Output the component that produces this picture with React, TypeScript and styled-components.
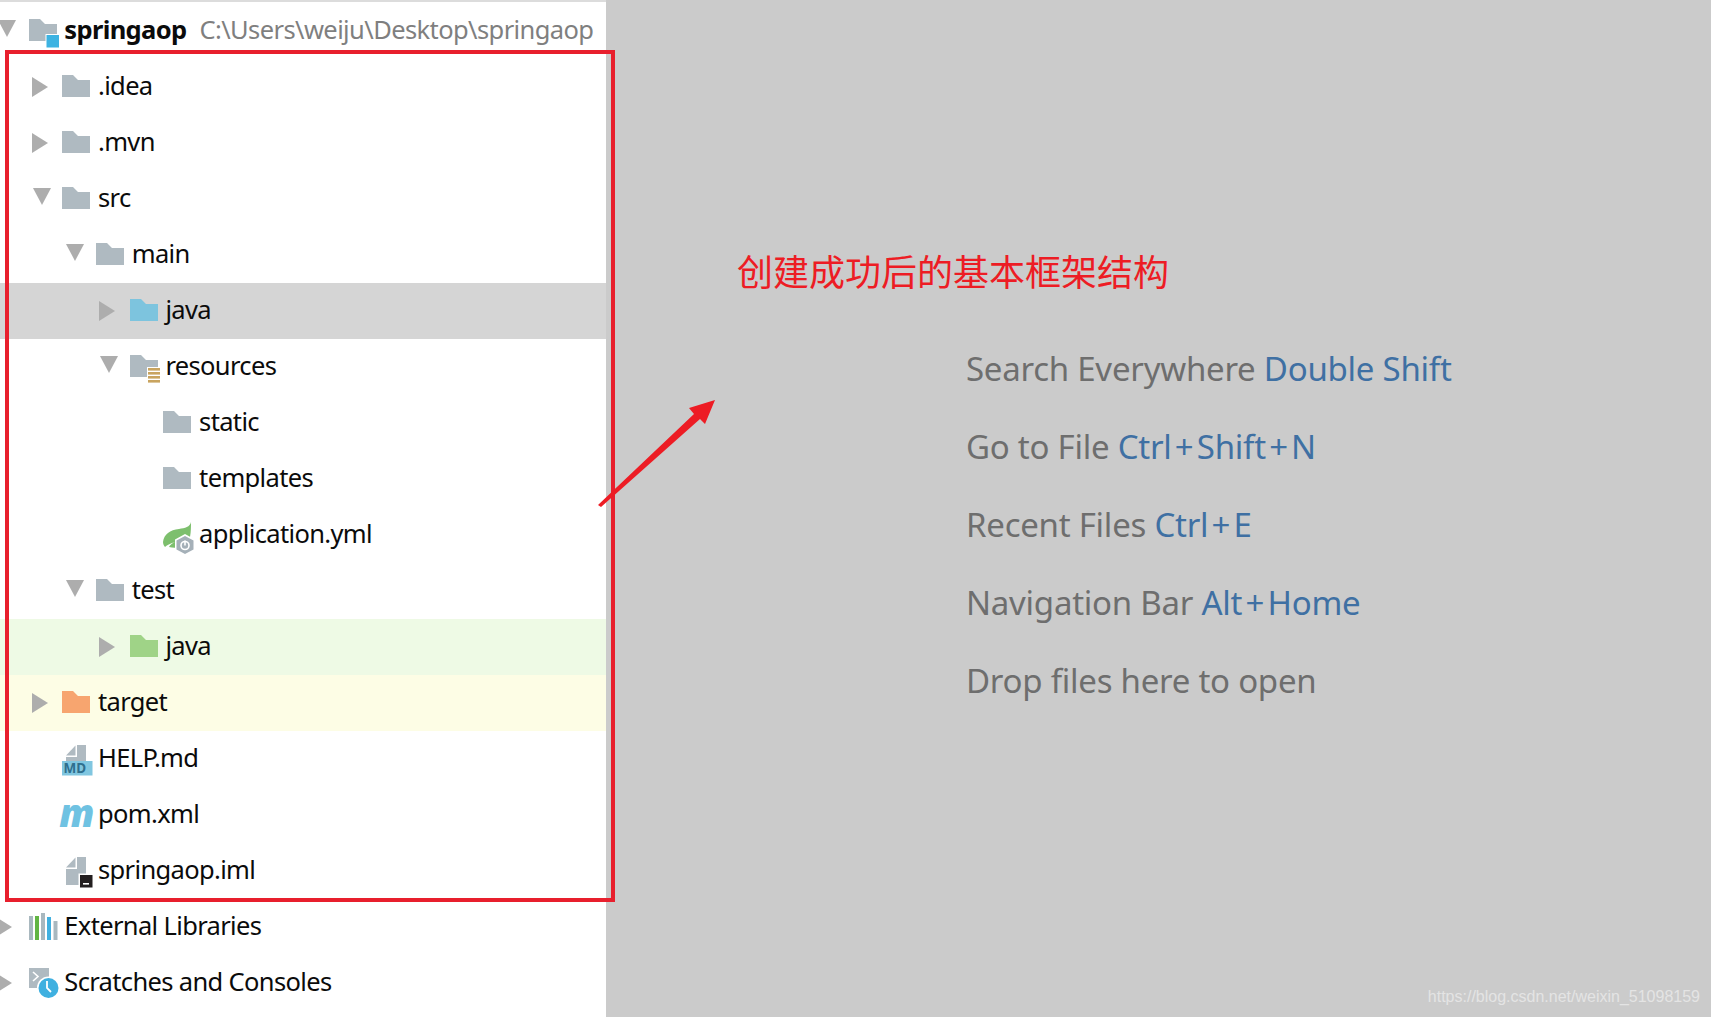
import React from 'react';
import styled, { createGlobalStyle } from 'styled-components';

const Global = createGlobalStyle`
  html, body { margin: 0; padding: 0; width: 100%; height: 100%; overflow: hidden; background: #cbcbcb; }
  #root { width: 100%; height: 100%; }
`;

const Page = styled.div`
  position: relative;
  display: flex;
  width: 1711px;
  height: 1017px;
  overflow: hidden;
  background: #cbcbcb;
  font-family: "Noto Sans", "Open Sans", sans-serif;
`;

const Sidebar = styled.aside`
  width: 606px;
  flex: none;
  box-sizing: border-box;
  padding-top: 1px;
  border-top: 2px solid #dcdcdc;
  background: #fff;
  overflow: hidden;
`;

const Row = styled.div<{ $depth: number; $bg?: string }>`
  display: flex;
  align-items: center;
  height: 56px;
  padding-left: ${p => p.$depth * 33.7}px;
  background: ${p => p.$bg ?? 'transparent'};
  white-space: nowrap;
`;

const ArrowSlot = styled.span`
  width: 27px;
  flex: none;
  display: flex;
  align-items: center;
`;

const IconSlot = styled.span`
  width: 35.8px;
  height: 32px;
  margin-left: 1.5px;
  margin-top: -2px;
  flex: none;
  display: block;
  svg { display: block; overflow: visible; }
`;

const Label = styled.span<{ $bold?: boolean }>`
  font-size: 25.5px;
  line-height: 32px;
  padding-bottom: 4px;
  color: #0b0b0b;
  letter-spacing: -0.65px;
  font-weight: ${p => (p.$bold ? 700 : 400)};
`;

const PathText = styled.span`
  margin-left: 13px;
  padding-bottom: 4px;
  font-size: 25.5px;
  line-height: 32px;
  color: #7f7f7f;
  letter-spacing: -0.6px;
`;

const Main = styled.main`
  flex: 1;
  display: flex;
  flex-direction: column;
  padding-top: 247px;
`;

const Note = styled.div`
  margin-left: 131px;
  font-family: "Noto Sans CJK SC", sans-serif;
  font-size: 36px;
  line-height: 46px;
  color: #ed1c24;
`;

const Hints = styled.div`
  margin-top: 54px;
  margin-left: 360px;
  display: flex;
  flex-direction: column;
  gap: 34px;
`;

const Hint = styled.div`
  font-size: 33px;
  line-height: 44px;
  letter-spacing: -0.25px;
  color: #6e6e6e;
  white-space: nowrap;
`;

const Key = styled.span`
  color: #3f70a3;
`;

const Plus = styled.span`
  margin: 0 3.3px;
`;

const RedBox = styled.div`
  position: absolute;
  left: 5px;
  top: 50px;
  width: 610px;
  height: 852px;
  box-sizing: border-box;
  border: 4px solid #e81f2d;
  pointer-events: none;
`;

const ArrowOverlay = styled.svg`
  position: absolute;
  left: 590px;
  top: 390px;
`;

const Watermark = styled.div`
  position: absolute;
  right: 11px;
  bottom: 10px;
  font-family: "Liberation Sans", sans-serif;
  font-size: 16px;
  line-height: 20px;
  color: #e4e4e4;
`;

const Right = ({ d }: { d: number }) => (
  <svg width="17" height="20" viewBox="0 0 17 20" style={{ marginLeft: d === 0 ? -4 : -2 }}>
    <path d="M0 0 L16 10 L0 20 Z" fill="#adadad" />
  </svg>
);

const Down = ({ d }: { d: number }) => (
  <svg width="19" height="17" viewBox="0 0 19 17" style={{ marginLeft: d === 0 ? -2 : -1, marginTop: -6 }}>
    <path d="M0 0 H18 L9 17 Z" fill="#adadad" />
  </svg>
);

const Folder = ({ color = '#afbac1' }: { color?: string }) => (
  <svg width="28" height="32" viewBox="0 0 28 32">
    <path d="M0 5 H11 L16 10 H28 V27 H0 Z" fill={color} />
  </svg>
);

const ProjectIcon = () => (
  <svg width="32" height="32" viewBox="0 0 32 32">
    <path d="M0 5 H11 L16 10 H28 V27 H0 Z" fill="#afbac1" />
    <rect x="16.5" y="20" width="15" height="15" fill="#fff" />
    <rect x="17.5" y="21" width="12.5" height="12.5" fill="#3db3e2" />
  </svg>
);

const ResourcesIcon = () => (
  <svg width="32" height="32" viewBox="0 0 32 32">
    <path d="M0 5 H11 L16 10 H28 V27 H0 Z" fill="#afbac1" />
    <rect x="17" y="17" width="15" height="17" fill="#fff" />
    <g fill="#c9a45f">
      <rect x="18" y="18" width="12" height="2.6" />
      <rect x="18" y="22" width="12" height="2.6" />
      <rect x="18" y="26" width="12" height="2.6" />
      <rect x="18" y="30" width="12" height="2.6" />
    </g>
  </svg>
);

const SpringIcon = () => (
  <svg width="32" height="32" viewBox="0 0 32 32">
    <path d="M28 4 C27 9 22 10 16 11 C7 12 1 16 0 24 C0 26 1 28 2 29 C4 27 8 25 12 24 C9 25 7 27 6 29 C14 31 24 29 27 19 C28 14 28 8 28 4 Z" fill="#7dbf6d" />
    <path d="M22 16 L32 21.5 V32.5 L22 38 L12 32.5 V21.5 Z" fill="#fff" />
    <path d="M22 18 L30.5 22.5 V31.5 L22 36 L13.5 31.5 V22.5 Z" fill="#a5b0b8" />
    <circle cx="22" cy="27.5" r="4" fill="none" stroke="#fff" strokeWidth="1.6" />
    <rect x="21.2" y="22.5" width="1.6" height="5" fill="#fff" />
  </svg>
);

const PageFold = () => (
  <>
    <path d="M15 3 H24 V19 H4 V15 H15 Z" fill="#afbac1" />
    <path d="M4 13.5 L13.5 3.5 V13.5 Z" fill="#afbac1" />
  </>
);

const MdIcon = () => (
  <svg width="31" height="34" viewBox="0 0 31 34">
    <PageFold />
    <rect x="0" y="19" width="30.5" height="14.5" fill="#80c6e0" />
    <text x="1.5" y="31" fontFamily="Noto Sans, sans-serif" fontWeight="700" fontSize="13.5" fill="#2f6f8e">MD</text>
  </svg>
);

const MavenLetter = styled.span`
  display: block;
  font-family: "Open Sans", sans-serif;
  font-style: italic;
  font-weight: 800;
  font-size: 38px;
  line-height: 32px;
  margin-top: -2px;
  margin-left: -3px;
  color: #6fc2e2;
`;

const ImlIcon = () => (
  <svg width="32" height="34" viewBox="0 0 32 34">
    <path d="M15 3 H24 V31 H4 V15 H15 Z" fill="#afbac1" />
    <path d="M4 13.5 L13.5 3.5 V13.5 Z" fill="#afbac1" />
    <rect x="16.5" y="19.5" width="15" height="15" fill="#fff" />
    <rect x="18" y="21" width="12.5" height="12.5" fill="#231f20" />
    <rect x="21" y="29" width="6" height="1.6" fill="#fff" />
  </svg>
);

const LibIcon = () => (
  <svg width="29" height="32" viewBox="0 0 29 32">
    <rect x="0" y="6" width="4" height="24" fill="#a9b8bf" />
    <rect x="6" y="6" width="4" height="24" fill="#62b543" />
    <rect x="12" y="3" width="4" height="27" fill="#a9b8bf" />
    <rect x="18" y="7" width="4" height="23" fill="#40b0e0" />
    <rect x="24.5" y="11" width="4" height="19" fill="#a9b8bf" />
  </svg>
);

const ScratchIcon = () => (
  <svg width="32" height="34" viewBox="0 0 32 34">
    <rect x="0" y="2" width="20" height="20" fill="#afbac1" />
    <path d="M4 6 L9 10.5 L4 15" fill="none" stroke="#fff" strokeWidth="1.6" />
    <circle cx="19.5" cy="22" r="11.5" fill="#fff" />
    <circle cx="19.5" cy="22" r="10" fill="#3fb0e0" />
    <path d="M18 15 V22 L22 26" fill="none" stroke="#fff" strokeWidth="1.8" />
  </svg>
);

type Item = {
  d: number;
  a?: 'r' | 'd';
  icon: React.ReactNode;
  text: string;
  bg?: string;
};

const items: Item[] = [
  { d: 1, a: 'r', icon: <Folder />, text: '.idea' },
  { d: 1, a: 'r', icon: <Folder />, text: '.mvn' },
  { d: 1, a: 'd', icon: <Folder />, text: 'src' },
  { d: 2, a: 'd', icon: <Folder />, text: 'main' },
  { d: 3, a: 'r', icon: <Folder color="#7dc4de" />, text: 'java', bg: '#d5d5d5' },
  { d: 3, a: 'd', icon: <ResourcesIcon />, text: 'resources' },
  { d: 4, icon: <Folder />, text: 'static' },
  { d: 4, icon: <Folder />, text: 'templates' },
  { d: 4, icon: <SpringIcon />, text: 'application.yml' },
  { d: 2, a: 'd', icon: <Folder />, text: 'test' },
  { d: 3, a: 'r', icon: <Folder color="#9fd387" />, text: 'java', bg: '#eefae5' },
  { d: 1, a: 'r', icon: <Folder color="#f7a56f" />, text: 'target', bg: '#fdfde5' },
  { d: 1, icon: <MdIcon />, text: 'HELP.md' },
  { d: 1, icon: <MavenLetter>m</MavenLetter>, text: 'pom.xml' },
  { d: 1, icon: <ImlIcon />, text: 'springaop.iml' },
  { d: 0, a: 'r', icon: <LibIcon />, text: 'External Libraries' },
  { d: 0, a: 'r', icon: <ScratchIcon />, text: 'Scratches and Consoles' },
];

export default function App() {
  return (
    <Page>
      <Global />
      <Sidebar>
        <Row $depth={0}>
          <ArrowSlot><Down d={0} /></ArrowSlot>
          <IconSlot><ProjectIcon /></IconSlot>
          <Label $bold>springaop</Label>
          <PathText>C:\Users\weiju\Desktop\springaop</PathText>
        </Row>
        {items.map((it, i) => (
          <Row key={i} $depth={it.d} $bg={it.bg}>
            <ArrowSlot>
              {it.a === 'r' && <Right d={it.d} />}
              {it.a === 'd' && <Down d={it.d} />}
            </ArrowSlot>
            <IconSlot>{it.icon}</IconSlot>
            <Label>{it.text}</Label>
          </Row>
        ))}
      </Sidebar>
      <Main>
        <Note>创建成功后的基本框架结构</Note>
        <Hints>
          <Hint>Search Everywhere <Key>Double Shift</Key></Hint>
          <Hint>Go to File <Key>Ctrl<Plus>+</Plus>Shift<Plus>+</Plus>N</Key></Hint>
          <Hint>Recent Files <Key>Ctrl<Plus>+</Plus>E</Key></Hint>
          <Hint>Navigation Bar <Key>Alt<Plus>+</Plus>Home</Key></Hint>
          <Hint>Drop files here to open</Hint>
        </Hints>
      </Main>
      <RedBox />
      <ArrowOverlay width="135" height="125" viewBox="590 390 135 125">
        <path d="M598 505 L694 414 L689 408 L715 400 L705 424 L700 419 L601 507 Z" fill="#ed1c24" />
      </ArrowOverlay>
      <Watermark>https://blog.csdn.net/weixin_51098159</Watermark>
    </Page>
  );
}
